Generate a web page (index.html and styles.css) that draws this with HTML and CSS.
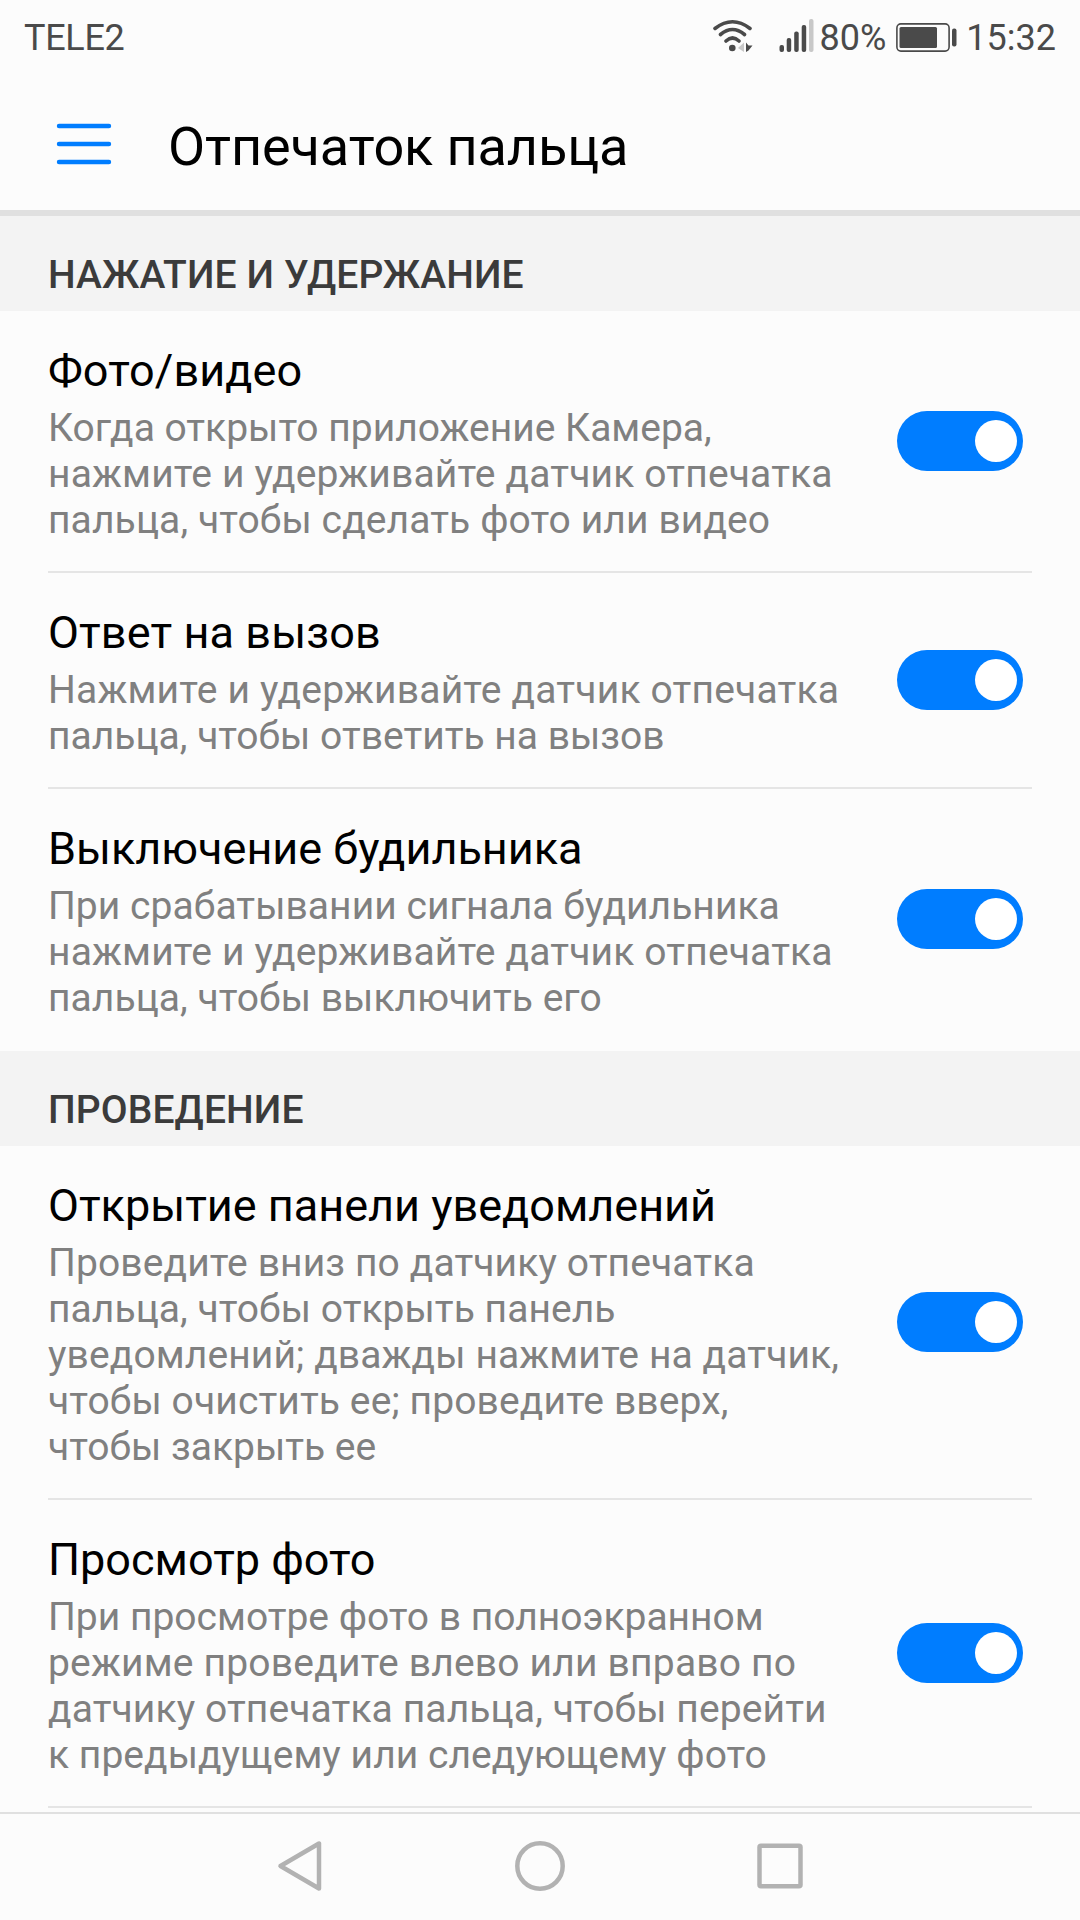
FILE: index.html
```html
<!DOCTYPE html>
<html lang="ru">
<head>
<meta charset="utf-8">
<title>Отпечаток пальца</title>
<link rel="stylesheet" href="styles.css">
</head>
<body>
<div class="screen">
  <div class="status">
    <span class="carrier">TELE2</span>
    <svg class="wifi" width="40" height="34" viewBox="0 0 40 34" fill="none" stroke="#4a4a4a" stroke-width="3.6" stroke-linecap="round">
      <path d="M2 9.500Q19.500-4 37 9.500M7.500 15.500Q19.500 5.500 31.500 15.500M13 22Q19.500 16 26 22"/>
      <circle cx="19.300" cy="29" r="3.300" fill="#4a4a4a" stroke="none"/>
      <path d="M31 23.500v9.500l-6-4z" fill="#c8c8c8" stroke="none"/>
      <path d="M33 23.500v9.500l2.500-1.500 4-5h-4z" fill="#4a4a4a" stroke="none"/>
    </svg>
    <svg class="signal" width="36" height="34" viewBox="0 0 36 34" fill="#4a4a4a">
      <rect x="0.500" y="26" width="4.500" height="7" rx="2"/>
      <rect x="7.700" y="19" width="4.500" height="14" rx="2"/>
      <rect x="15.200" y="12.500" width="4.500" height="20.500" rx="2"/>
      <rect x="22.700" y="6" width="4.500" height="27" rx="2"/>
      <rect x="30" y="0" width="4.500" height="33" rx="2" fill="#c8c8c8"/>
    </svg>
    <span class="percent">80%</span>
    <svg class="battery" width="62" height="30" viewBox="0 0 62 30">
      <rect x="0.900" y="0.900" width="52.200" height="27.200" rx="4" fill="none" stroke="#4a4a4a" stroke-width="1.600"/>
      <rect x="3.500" y="4" width="37.500" height="21" rx="1.500" fill="#4a4a4a"/>
      <rect x="56" y="5.500" width="4.500" height="18" rx="2" fill="#4a4a4a"/>
    </svg>
    <span class="clock">15:32</span>
  </div>
  <header class="appbar">
    <svg class="menu" width="56" height="42" viewBox="0 0 56 42" stroke="#007dff" stroke-width="4.400" stroke-linecap="round">
      <path d="M3 3h50M3 21h50M3 39h50"/>
    </svg>
    <h1>Отпечаток пальца</h1>
  </header>
  <main class="list">
    <h2>НАЖАТИЕ И УДЕРЖАНИЕ</h2>
    <div class="row"><div class="text"><h3 class="loose-2">Фото/видео</h3><p><span>Когда открыто приложение Камера,</span><span class="loose-3">нажмите и удерживайте датчик отпечатка</span><span class="loose-2">пальца, чтобы сделать фото или видео</span></p></div><span class="toggle"></span></div>
    <div class="row"><div class="text"><h3 class="loose-2">Ответ на вызов</h3><p><span class="loose-4">Нажмите и удерживайте датчик отпечатка</span><span>пальца, чтобы ответить на вызов</span></p></div><span class="toggle"></span></div>
    <div class="row last"><div class="text"><h3>Выключение будильника</h3><p><span class="loose-1">При срабатывании сигнала будильника</span><span class="loose-3">нажмите и удерживайте датчик отпечатка</span><span class="loose-1">пальца, чтобы выключить его</span></p></div><span class="toggle"></span></div>
    <h2>ПРОВЕДЕНИЕ</h2>
    <div class="row"><div class="text"><h3>Открытие панели уведомлений</h3><p><span class="loose-2">Проведите вниз по датчику отпечатка</span><span class="loose-1">пальца, чтобы открыть панель</span><span class="loose-2">уведомлений; дважды нажмите на датчик,</span><span class="loose-2">чтобы очистить ее; проведите вверх,</span><span>чтобы закрыть ее</span></p></div><span class="toggle"></span></div>
    <div class="row"><div class="text"><h3>Просмотр фото</h3><p><span>При просмотре фото в полноэкранном</span><span class="loose-4">режиме проведите влево или вправо по</span><span class="loose-2">датчику отпечатка пальца, чтобы перейти</span><span class="loose-1">к предыдущему или следующему фото</span></p></div><span class="toggle"></span></div>
  </main>
  <nav class="navbar">
    <svg width="60" height="60" viewBox="0 0 60 60"><path d="M49 7.500V52.500L10.500 30Z"/></svg>
    <svg width="60" height="60" viewBox="0 0 60 60"><circle cx="30" cy="30" r="22.700"/></svg>
    <svg width="60" height="60" viewBox="0 0 60 60"><rect x="9.500" y="9.700" width="41" height="40.600" rx="1.500"/></svg>
  </nav>
</div>
</body>
</html>
```
FILE: styles.css
```css
* { box-sizing: border-box; margin: 0; padding: 0; }
body { background: #fcfcfc; font-family: Roboto, "Noto Sans", sans-serif; color: #000; }
.screen { width: 1080px; height: 1920px; display: flex; flex-direction: column; overflow: hidden; }
.status { height: 72px; flex: none; display: flex; align-items: flex-start; padding: 19px 24px 0; color: #4a4a4a; font-size: 36px; line-height: 38px; }
.carrier { margin-right: auto; letter-spacing: -0.3px; }
.wifi { margin-right: 26px; }
.signal { margin-right: 5px; }
.percent { margin-right: 10px; }
.battery { margin: 4px 8px 0 0; }
.appbar { height: 144px; flex: none; display: flex; align-items: flex-start; padding: 43px 0 0 56px; border-bottom: 6px solid #e0e0e0; }
.menu { margin: 8px 56px 0 0; }
h1 { font-size: 54px; line-height: 63px; font-weight: 400; letter-spacing: -0.1px; }
.list { flex: none; height: 1596px; overflow: hidden; }
h2 { height: 95px; padding: 36px 48px 0; background: #f3f3f3; color: #3b3b3b; font-size: 39px; line-height: 46px; font-weight: 500; letter-spacing: 0.1px; }
.row { display: flex; align-items: center; justify-content: space-between; margin: 0 48px; padding: 31px 9px 31px 0; border-bottom: 2px solid #e5e5e5; }
.last { border-color: transparent; }
.text { white-space: nowrap; padding-top: 2px; margin-bottom: -3px; }
h3 { font-size: 45px; line-height: 54px; font-weight: 400; margin-bottom: 7px; }
p { font-size: 39px; line-height: 46px; color: #808080; }
p span { display: block; }
.loose-1 { letter-spacing: 0.05px; }
.loose-2 { letter-spacing: 0.11px; }
.loose-3 { letter-spacing: 0.16px; }
.loose-4 { letter-spacing: 0.19px; }
.toggle { width: 126px; height: 60px; flex: none; border-radius: 30px; background: #007dff; display: flex; align-items: center; justify-content: flex-end; padding-right: 6px; }
.toggle::before { content: ""; width: 42px; height: 42px; border-radius: 50%; background: #fff; }
.navbar { height: 108px; flex: none; border-top: 2px solid #e0e0e0; padding-bottom: 2px; display: flex; align-items: center; justify-content: center; gap: 180px; }
.navbar svg { fill: none; stroke: #b2b2b2; stroke-width: 4.500; stroke-linejoin: round; }
```
